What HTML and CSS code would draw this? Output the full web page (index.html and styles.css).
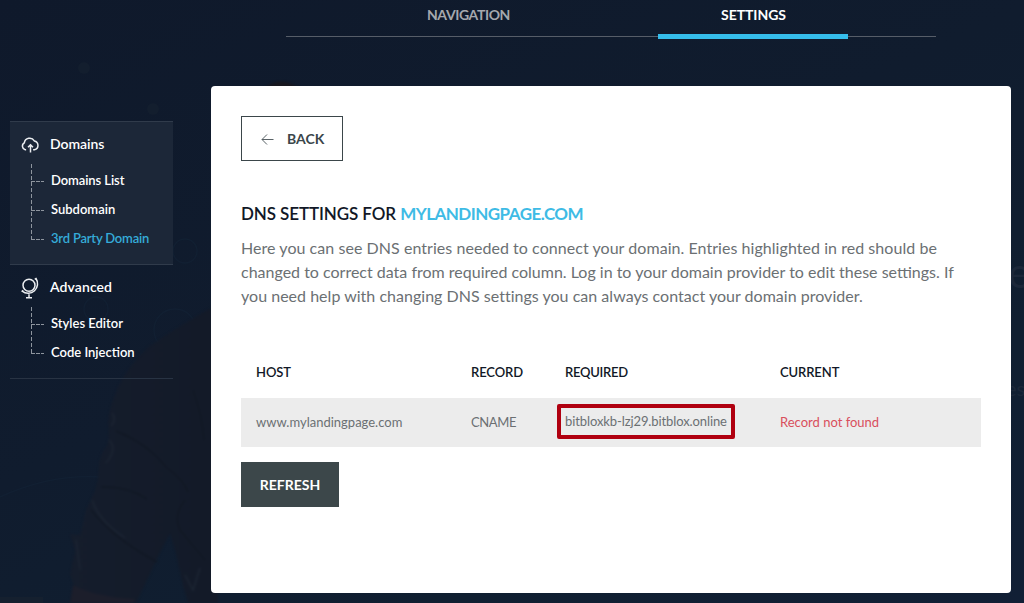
FILE: index.html
```html
<!DOCTYPE html>
<html lang="en">
<head>
<meta charset="utf-8">
<title>DNS Settings</title>
<link rel="stylesheet" href="styles.css">
</head>
<body>
<svg class="backdrop" viewBox="0 0 1024 603" aria-hidden="true">
  <defs>
    <linearGradient id="sleeve" x1="0" y1="0" x2="1" y2="0"><stop offset="0" stop-color="#151d2c"/><stop offset="1" stop-color="#131a28"/></linearGradient>
    <filter id="soft" color-interpolation-filters="sRGB"><feGaussianBlur stdDeviation="1"/></filter>
  </defs>
  <g fill="#131e2e"><circle cx="84" cy="68" r="6"/><circle cx="153" cy="109" r="6"/></g>
  <g fill="none" stroke="#132235" stroke-width="1.3" opacity=".7">
    <circle cx="185" cy="251" r="12"/><circle cx="96" cy="309" r="12"/><circle cx="175" cy="330" r="21"/>
    <path d="M0 497Q50 474 100 477"/>
  </g>
  <g filter="url(#soft)">
    <path fill="#17171f" d="M262 90Q280 73 302 90Z"/>
    <path fill="url(#sleeve)" d="M218 304Q179 326 150 346Q122 372 116 393Q109 408 108 423Q110 435 107 446Q98 456 99 471Q97 487 93 495L86 510L80 535L70 534L75 550L70 574L74 586L70 603H136L157 559L170 533L176 553L183 585L188 603H218Z"/>
    <path fill="#1c1e2b" d="M73 585Q95 597 135 599L133 603H70Z"/>
    <g fill="none" stroke="#111824" stroke-width="1.5">
      <path d="M116 431Q148 444 166 467Q184 480 188 492M101 487Q128 486 147 499M91 510Q113 538 157 562M193 390Q202 415 204 440M185 500Q173 515 180 530L205 560"/>
    </g>
    <g fill="none" stroke="#1c2533" stroke-width="1.5">
      <path d="M112 413Q117 420 111 426M109 440Q118 449 106 463M92 500Q98 520 125 538M76 540L80 570M185 575L193 590L200 568"/>
    </g>
  </g>
  <path fill="#15202f" d="M0 597H43V603H0Z"/>
  <text class="backdrop-large" x="1008" y="288">e</text>
  <text class="backdrop-small" x="1006" y="396">es</text>
</svg>

<div class="page">
  <nav class="tabs">
    <a class="tab tab-navigation">NAVIGATION</a>
    <a class="tab tab-settings">SETTINGS</a>
  </nav>
  <div class="columns">
    <aside class="sidebar">
      <section class="group group-active">
        <h2 class="group-title">
          <svg class="icon" viewBox="0 0 20 22"><path d="M5.1 15.7H4.2A3.7 3.7 0 0 1 3.3 8.9 5.4 5.4 0 0 1 13.3 6.9 4.5 4.5 0 0 1 13.5 15.7H12.1M9.5 18.4V11M7 13.2L9.5 10.7L12 13.2"/></svg>
          <span>Domains</span>
        </h2>
        <ul class="tree">
          <li class="tight">Domains List</li>
          <li>Subdomain</li>
          <li class="current">3rd Party Domain</li>
        </ul>
      </section>
      <section class="group group-last">
        <h2 class="group-title">
          <svg class="icon" viewBox="0 0 20 22"><circle cx="8" cy="8.3" r="6"/><path d="M13.8 2.4L15 1.5A9.5 9.5 0 0 1 1.2 14.2L2.2 13.3M8 17.2V20.6M5 20.7H11"/></svg>
          <span class="wide">Advanced</span>
        </h2>
        <ul class="tree">
          <li>Styles Editor</li>
          <li>Code Injection</li>
        </ul>
      </section>
    </aside>
    <main class="card">
      <button class="back"><svg class="arrow" viewBox="0 0 13 11"><path d="M12.5 5.5H1M6 .5L1 5.5L6 10.5"/></svg>BACK</button>
      <h1 class="heading">DNS SETTINGS FOR <span class="domain">MYLANDINGPAGE.COM</span></h1>
      <p class="intro"><span class="first-line">Here you can see DNS entries needed to connect your domain. Entries highlighted in red should be</span><br>changed to correct data from required column. Log in to your domain provider to edit these settings. If<br><span class="last-line">you need help with changing DNS settings you can always contact your domain provider.</span></p>
      <div class="records">
        <div class="row head"><span>HOST</span><span>RECORD</span><span class="required-head">REQUIRED</span><span>CURRENT</span></div>
        <div class="row entry"><span>www.mylandingpage.com</span><span class="type">CNAME</span><span class="required">bitbloxkb-lzj29.bitblox.online</span><span class="missing">Record not found</span></div>
      </div>
      <button class="refresh">REFRESH</button>
    </main>
  </div>
</div>
</body>
</html>
```
FILE: styles.css
```css
* { box-sizing: border-box; }

body {
  margin: 0;
  height: 603px;
  overflow: hidden;
  background: linear-gradient(155deg, #0f192b 0%, #101c2e 45%, #101f31 75%, #111f35 100%);
  color: #fff;
  font-family: Lato, "Open Sans", sans-serif;
}

.backdrop { position: absolute; inset: 0; width: 1024px; height: 603px; }
.backdrop-large { font-size: 42px; fill: #1b2739; }
.backdrop-small { font-size: 20px; fill: #1b2739; }

.page { position: relative; height: 603px; }

.tabs {
  display: flex;
  width: 650px;
  height: 39px;
  margin-left: 286px;
  background: linear-gradient(#565d68, #565d68) 0 36px / 100% 1px no-repeat;
  font-size: 14px;
  font-weight: 700;
  line-height: 20px;
  text-align: center;
}
.tab { padding: 5px 0 0 1px; }
.tab-navigation { width: 364px; margin-right: 8px; color: #a5a8ae; letter-spacing: -.4px; }
.tab-settings { width: 190px; border-bottom: 5px solid #35bdeb; letter-spacing: -.05px; }

.columns { display: flex; align-items: flex-start; gap: 38px; padding: 47px 0 0 10px; }

.sidebar { width: 163px; margin-top: 35px; }
.group { border-top: 1px solid #303b4b; padding: 11px 0 0 11px; }
.group-active { height: 143px; background: #1c2738; }
.group-last { height: 115px; border-bottom: 1px solid #283343; }
.group-title {
  display: flex;
  align-items: center;
  gap: 9px;
  height: 20px;
  margin: 0;
  font-size: 14px;
  font-weight: 600;
  letter-spacing: -.06px;
}
.wide { letter-spacing: .1px; }
.icon { width: 20px; height: 22px; margin-top: 4px; fill: none; stroke: #eceef1; stroke-width: 1.5; }

.tree {
  position: relative;
  margin: 11px 0 0 10px;
  padding: 3px 0 0;
  list-style: none;
  font-size: 13px;
  font-weight: 600;
  line-height: 27px;
}
.tree::before {
  content: "";
  position: absolute;
  left: 0;
  top: 0;
  bottom: 14px;
  width: 1px;
  background: repeating-linear-gradient(#8e959e 0 4px, transparent 4px 6px);
}
.tree li {
  padding: 0 0 2px 20px;
  background: repeating-linear-gradient(90deg, #8e959e 0 4px, transparent 4px 5px) 0 14px / 13px 1px no-repeat;
}
.tree .tight { letter-spacing: -.08px; }
.tree .current { color: #35acd9; letter-spacing: -.2px; }

.card {
  display: flex;
  flex-direction: column;
  align-items: flex-start;
  width: 800px;
  height: 507px;
  padding: 30px;
  border-radius: 4px;
  background: #fff;
  color: #6b7073;
}

button { font: 700 14px/20px Lato, "Open Sans", sans-serif; }
.back {
  display: flex;
  align-items: center;
  gap: 13px;
  width: 102px;
  height: 45px;
  padding: 1px 0 0 19px;
  border: 1px solid #3b464a;
  background: #fff;
  color: #3b464a;
}
.arrow { width: 13px; height: 11px; fill: none; stroke: #596266; }

.heading {
  margin: 41px 0 10px;
  color: #111827;
  font-size: 17px;
  font-weight: 600;
  line-height: 24px;
  letter-spacing: -.1px;
}
.domain { color: #3ebbe5; font-weight: 700; letter-spacing: -.53px; }

.intro { margin: 0; font-size: 16px; line-height: 24px; white-space: nowrap; }
.first-line { letter-spacing: .05px; }
.last-line { letter-spacing: .02px; }

.records { width: 740px; margin-top: 40px; font-size: 13px; }
.row { display: grid; grid-template-columns: 215px 94px 215px 1fr; align-items: center; padding: 0 0 2px 15px; }
.head { height: 50px; color: #111827; font-weight: 600; letter-spacing: -.1px; }
.required-head { letter-spacing: -.25px; }
.entry { height: 49px; background: #ececec; }
.type { letter-spacing: -.4px; }
.required {
  justify-self: start;
  width: 178px;
  height: 35px;
  margin-left: -8px;
  padding-left: 4px;
  border: 4px solid #b00010;
  border-radius: 2px;
  line-height: 27px;
  letter-spacing: -.1px;
  white-space: nowrap;
}
.missing { color: #d94f5c; }

.refresh {
  width: 98px;
  height: 45px;
  margin-top: 15px;
  padding: 1px 0 0;
  border: 0;
  background: #3c474a;
  color: #fff;
}
```
